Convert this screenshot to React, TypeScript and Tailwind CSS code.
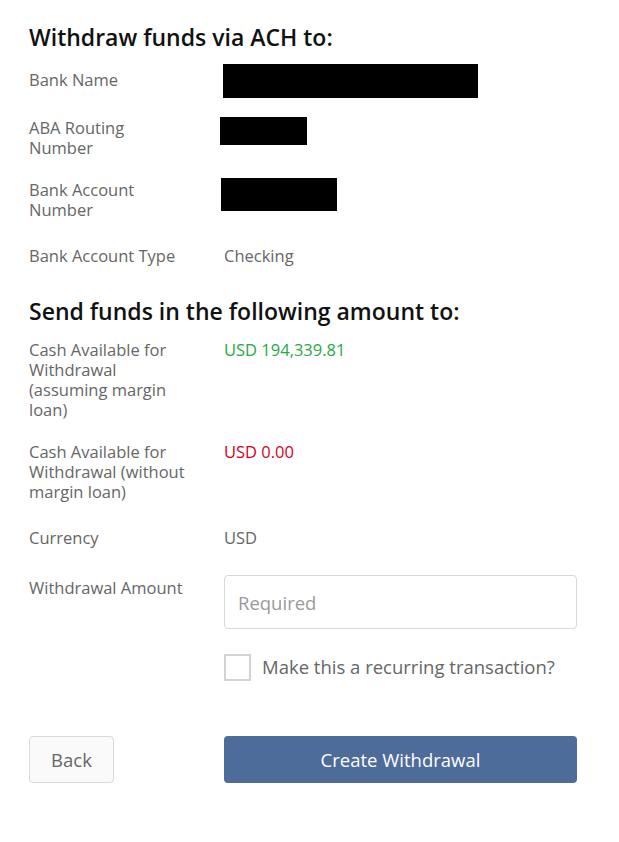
import { useState } from "react";

const Row = ({
  label,
  children,
  className = "",
}: {
  label: string;
  children?: React.ReactNode;
  className?: string;
}) => (
  <div className={`flex items-start ${className}`}>
    <div className="w-[160px] shrink-0 text-[16.5px] leading-5 text-[#666666]">{label}</div>
    <div className="ml-[35px] flex-1 text-[16.5px] leading-5 text-[#666666]">{children}</div>
  </div>
);

// blacked-out value, kept to one text line in height so rows stay even
const Redacted = ({ w, h, dx = 0, dy = 0 }: { w: string; h: string; dx?: number; dy?: number }) => (
  <div className="h-5">
    <div className={`${w} ${h} bg-black`} style={{ transform: `translate(${dx}px, ${dy}px)` }} />
  </div>
);

const App = () => {
  const [recurring, setRecurring] = useState(false);
  const [amount, setAmount] = useState("");

  return (
    <div className="min-h-[842px] bg-white font-['Open_Sans',sans-serif] antialiased">
      <div className="pl-[29px] pt-[23px]">
        <h2 className="text-[23px] font-semibold leading-7 text-[#111111]">Withdraw funds via ACH to:</h2>

        <Row label="Bank Name" className="mt-[19px]">
          <Redacted w="w-[255px]" h="h-[34px]" dx={-1} dy={-6} />
        </Row>
        <Row label="ABA Routing Number" className="mt-[28px]">
          <Redacted w="w-[87px]" h="h-[28px]" dx={-4} dy={-1} />
        </Row>
        <Row label="Bank Account Number" className="mt-[22px]">
          <Redacted w="w-[116px]" h="h-[33px]" dx={-3} dy={-2} />
        </Row>
        <Row label="Bank Account Type" className="mt-[26px]">
          Checking
        </Row>

        <h2 className="mt-[31px] text-[23px] font-semibold leading-7 text-[#111111]">
          Send funds in the following amount to:
        </h2>

        <Row label="Cash Available for Withdrawal (assuming margin loan)" className="mt-[15px]">
          <span className="text-[#27a845]">USD 194,339.81</span>
        </Row>
        <Row label="Cash Available for Withdrawal (without margin loan)" className="mt-[22px]">
          <span className="text-[#d0021b]">USD 0.00</span>
        </Row>
        <Row label="Currency" className="mt-[26px]">
          USD
        </Row>

        <div className="mt-[27px] flex items-start">
          <div className="w-[160px] shrink-0 pt-[3px] text-[16.5px] leading-5 text-[#666666]">Withdrawal Amount</div>
          <div className="ml-[35px]">
            <input
              value={amount}
              onChange={(e) => setAmount(e.target.value)}
              placeholder="Required"
              className="h-[54px] w-[353px] rounded border border-[#d9d9d9] px-[13px] text-[18.5px] text-[#444] outline-none placeholder:text-[#9a9a9a]"
            />
            <label className="mt-[25px] flex cursor-pointer items-center gap-[11px]">
              <span
                onClick={() => setRecurring(!recurring)}
                className="flex h-[27px] w-[27px] items-center justify-center border-2 border-[#d6d3ce] bg-white"
              >
                {recurring && <span className="h-[11px] w-[11px] bg-[#4e6c99]" />}
              </span>
              <span className="-mt-[2px] text-[18.5px] text-[#666666]">Make this a recurring transaction?</span>
            </label>
          </div>
        </div>

        <div className="mt-[55px] flex items-start">
          <button className="h-[47px] w-[85px] shrink-0 rounded border border-[#d9d9d9] bg-[#fafafa] text-[18.5px] text-[#666666]">
            Back
          </button>
          <button className="ml-[110px] h-[47px] w-[353px] shrink-0 rounded bg-[#4e6c99] text-[18.5px] text-white">
            Create Withdrawal
          </button>
        </div>
      </div>
    </div>
  );
};

export default App;
